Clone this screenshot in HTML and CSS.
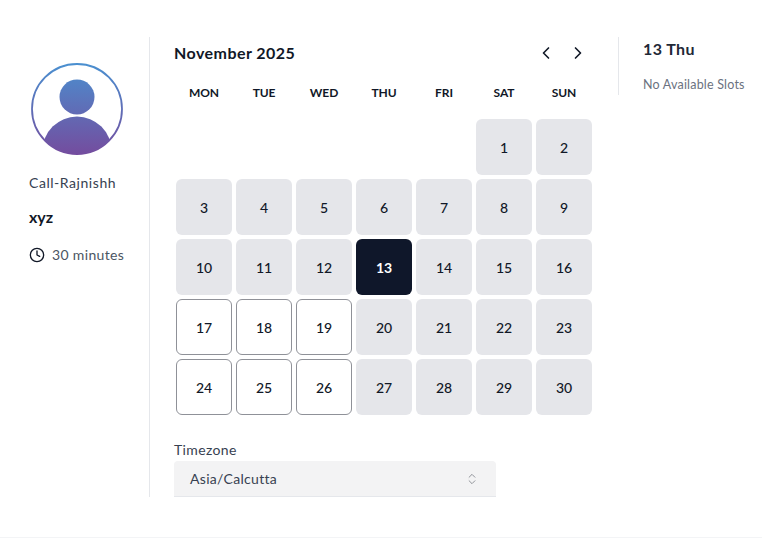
FILE: index.html
```html
<!DOCTYPE html>
<html lang="en">
<head>
  <meta charset="UTF-8" />
  <meta name="viewport" content="width=device-width, initial-scale=1.0"/>
  <title>Book a call</title>
  <link rel="stylesheet" href="styles.css">
</head>
<body>

  <div class="booking">
    <aside class="sidebar">
      <svg class="avatar" width="92" height="92" viewBox="0 0 92 92">
        <defs>
          <linearGradient id="grad" gradientUnits="userSpaceOnUse" x1="0" y1="0" x2="0" y2="92">
            <stop offset="0" stop-color="#4a90d0"/>
            <stop offset="1" stop-color="#744c9e"/>
          </linearGradient>
          <clipPath id="ring"><circle cx="46" cy="46" r="45"/></clipPath>
        </defs>
        <circle cx="46" cy="46" r="45" fill="#fff" stroke="url(#grad)" stroke-width="1.8"/>
        <circle cx="46" cy="34" r="17.5" fill="url(#grad)"/>
        <circle cx="46" cy="88" r="34.5" fill="url(#grad)" clip-path="url(#ring)"/>
      </svg>
      <p class="host">Call-Rajnishh</p>
      <p class="event">xyz</p>
      <div class="duration">
        <svg width="16" height="16" viewBox="0 0 24 24" fill="none" stroke="#111827" stroke-width="2" stroke-linecap="round" stroke-linejoin="round">
          <circle cx="12" cy="12" r="10"/>
          <polyline points="12 6 12 12 16 14"/>
        </svg>
        <span>30 minutes</span>
      </div>
    </aside>

    <main class="calendar">
      <div class="cal-head">
        <h2>November 2025</h2>
        <div class="cal-nav">
          <svg width="20" height="20" viewBox="0 0 24 24" fill="none" stroke="#111827" stroke-width="2" stroke-linecap="round" stroke-linejoin="round"><path d="m15 18-6-6 6-6"/></svg>
          <svg width="20" height="20" viewBox="0 0 24 24" fill="none" stroke="#111827" stroke-width="2" stroke-linecap="round" stroke-linejoin="round"><path d="m9 18 6-6-6-6"/></svg>
        </div>
      </div>

      <div class="week">
        <span>MON</span><span>TUE</span><span>WED</span><span>THU</span><span>FRI</span><span>SAT</span><span>SUN</span>
      </div>

      <div class="days">
        <span class="blank"></span><span class="blank"></span><span class="blank"></span><span class="blank"></span><span class="blank"></span>
        <div class="day">1</div><div class="day">2</div>
        <div class="day">3</div><div class="day">4</div><div class="day">5</div><div class="day">6</div><div class="day">7</div><div class="day">8</div><div class="day">9</div>
        <div class="day">10</div><div class="day">11</div><div class="day">12</div><div class="day selected">13</div><div class="day">14</div><div class="day">15</div><div class="day">16</div>
        <div class="day open">17</div><div class="day open">18</div><div class="day open">19</div><div class="day">20</div><div class="day">21</div><div class="day">22</div><div class="day">23</div>
        <div class="day open">24</div><div class="day open">25</div><div class="day open">26</div><div class="day">27</div><div class="day">28</div><div class="day">29</div><div class="day">30</div>
      </div>

      <div class="timezone">
        <label>Timezone</label>
        <div class="tz-select">
          <span>Asia/Calcutta</span>
          <svg width="14" height="14" viewBox="0 0 24 24" fill="none" stroke="#8a8d93" stroke-width="1.6" stroke-linecap="round" stroke-linejoin="round"><path d="m7 15 5 5 5-5"/><path d="m7 9 5-5 5 5"/></svg>
        </div>
      </div>
    </main>

    <section class="slots">
      <h3>13 Thu</h3>
      <p>No Available Slots</p>
    </section>
  </div>

</body>
</html>
```

FILE: styles.css
```css
body {
  font-family: Lato, Arial, sans-serif;
  background-color: white;
  color: #111827;
  margin: 0;
}

.booking {
  display: flex;
  align-items: flex-start;
  height: 538px;
  padding-top: 37px;
  box-sizing: border-box;
  border-bottom: 1px solid #f3f4f6;
}

.sidebar {
  width: 150px;
  height: 460px;
  box-sizing: border-box;
  padding: 26px 0 0 29px;
  border-right: 1px solid #e5e7eb;
}

.avatar {
  display: block;
  margin-left: 2px;
}

.host {
  margin: 19px 0 0;
  font-size: 14px;
  line-height: 18px;
  letter-spacing: 0.55px;
  color: #374151;
}

.event {
  margin: 15px 0 0;
  font-size: 16px;
  line-height: 20px;
  font-weight: 700;
}

.duration {
  display: flex;
  align-items: center;
  gap: 7px;
  margin-top: 18px;
  font-size: 14px;
  line-height: 20px;
  letter-spacing: 0.35px;
  color: #4b5563;
}

.calendar {
  width: 468px;
  box-sizing: border-box;
  padding: 0 30px 0 24px;
}

.cal-head {
  display: flex;
  align-items: center;
  justify-content: space-between;
  height: 32px;
}

.cal-head h2 {
  margin: 0 0 2px;
  font-size: 16px;
  letter-spacing: 0.45px;
  font-weight: 700;
}

.cal-nav {
  display: flex;
  gap: 12px;
}

.week,
.days {
  display: grid;
  grid-template-columns: repeat(7, 56px);
  gap: 4px;
  margin-left: 2px;
}

.week {
  margin-top: 15px;
  height: 18px;
  line-height: 18px;
  font-size: 12px;
  letter-spacing: -0.1px;
  font-weight: 700;
  text-align: center;
}

.days {
  margin-top: 17px;
  grid-auto-rows: 56px;
}

.day {
  display: flex;
  align-items: center;
  justify-content: center;
  box-sizing: border-box;
  background-color: #e5e6ea;
  border-radius: 6px;
  font-size: 14px;
  font-weight: 500;
}

.day.open {
  background-color: white;
  border: 1px solid #8f9198;
}

.day.selected {
  background-color: #0f172a;
  color: white;
  font-weight: 700;
}

.timezone {
  margin-top: 25px;
}

.timezone label {
  display: block;
  font-size: 14px;
  line-height: 20px;
  letter-spacing: 0.35px;
  color: #374151;
}

.tz-select {
  display: flex;
  align-items: center;
  justify-content: space-between;
  width: 322px;
  height: 36px;
  margin-top: 1px;
  box-sizing: border-box;
  padding: 0 17px 0 16px;
  background-color: #f3f3f4;
  border-bottom: 1px solid #e5e7eb;
  border-radius: 4px 4px 0 0;
  font-size: 14px;
  letter-spacing: 0.3px;
  color: #374151;
}

.slots {
  height: 58px;
  box-sizing: border-box;
  padding-left: 24px;
  border-left: 1px solid #e5e7eb;
}

.slots h3 {
  margin: 0;
  font-size: 16px;
  line-height: 24px;
  letter-spacing: 0.4px;
  font-weight: 700;
  color: #1f2937;
}

.slots p {
  margin: 15px 0 0;
  font-size: 12.5px;
  line-height: 18px;
  letter-spacing: 0.2px;
  color: #6b7280;
}
```
